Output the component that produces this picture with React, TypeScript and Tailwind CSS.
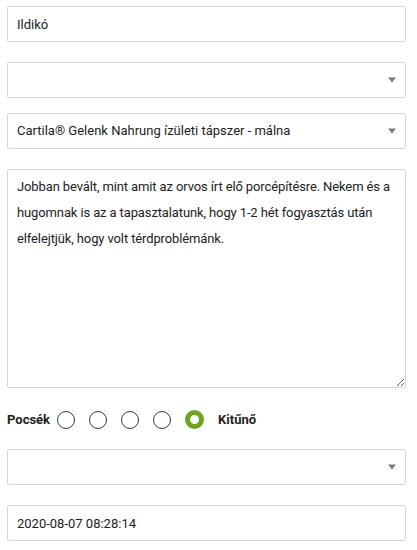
import React from "react";

function Arrow() {
  return (
    <span className="pointer-events-none absolute right-[10px] top-1/2 -translate-y-1/2 w-0 h-0 border-l-[4px] border-r-[4px] border-t-[5px] border-l-transparent border-r-transparent border-t-[#7a7a7a]" />
  );
}

function Select({ value }: { value?: string }) {
  return (
    <div className="relative h-[36px] w-full">
      <select
        defaultValue={value ?? ""}
        className="appearance-none h-full w-full rounded-[2px] border border-[#d6d6d6] bg-white pl-[9px] pr-[24px] text-[13px] text-[#222] outline-none"
        style={{ fontFamily: "Roboto, 'Noto Sans', sans-serif" }}
      >
        <option value=""></option>
        {value ? <option value={value}>{value}</option> : null}
      </select>
      <Arrow />
    </div>
  );
}

function Circle({ selected }: { selected?: boolean }) {
  return selected ? (
    <span className="block w-[19px] h-[19px] rounded-full border-[5px] border-[#6ca61f] bg-white" />
  ) : (
    <span className="block w-[18px] h-[18px] rounded-full border border-[#3a3a3a] bg-white" />
  );
}

export default function App() {
  const font = { fontFamily: "Roboto, 'Noto Sans', sans-serif" };
  return (
    <div className="w-[417px] h-[550px] bg-white pt-[6px] pl-[7px] pr-[11px] text-[#222]" style={font}>
      <input
        defaultValue="Ildikó"
        className="block h-[36px] w-full rounded-[2px] border border-[#d6d6d6] bg-white px-[9px] text-[13px] text-[#222] outline-none"
        style={font}
      />
      <div className="mt-[20px]">
        <Select />
      </div>
      <div className="mt-[15px]">
        <Select value="Cartila® Gelenk Nahrung ízületi tápszer - málna" />
      </div>
      <textarea
        defaultValue={
          "Jobban bevált, mint amit az orvos írt elő porcépítésre. Nekem és a hugomnak is az a tapasztalatunk, hogy 1-2 hét fogyasztás után elfelejtjük, hogy volt térdproblémánk."
        }
        className="mt-[20px] block h-[219px] w-full rounded-[2px] border border-[#d6d6d6] bg-white pl-[9px] pr-[3px] pt-[4px] text-[13px] leading-[26px] tracking-[-0.12px] text-[#222] outline-none"
        style={font}
      />
      <div className="mt-[22px] flex h-[19px] items-center">
        <span className="text-[13px] font-bold text-[#222]">Pocsék</span>
        <div className="ml-[7px] flex items-center gap-[14px]">
          <Circle />
          <Circle />
          <Circle />
          <Circle />
          <Circle selected />
        </div>
        <span className="ml-[14px] text-[13px] font-bold text-[#222]">Kitűnő</span>
      </div>
      <div className="mt-[20px]">
        <Select />
      </div>
      <input
        defaultValue="2020-08-07 08:28:14"
        className="mt-[20px] block h-[36px] w-full rounded-[2px] border border-[#d6d6d6] bg-white px-[9px] text-[13px] text-[#222] outline-none"
        style={font}
      />
    </div>
  );
}
